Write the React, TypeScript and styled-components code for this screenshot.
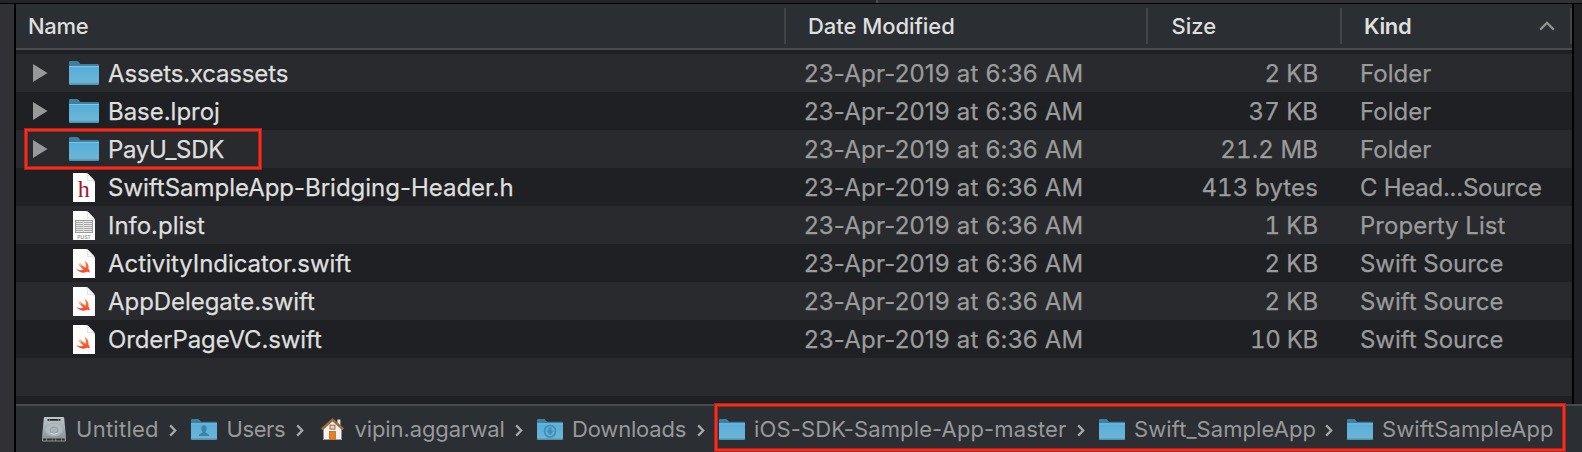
import React from 'react';
import styled, { createGlobalStyle } from 'styled-components';

const Global = createGlobalStyle`
  * { box-sizing: border-box; }
  body { margin: 0; background: #1f2023; }
`;

const Screen = styled.div`
  display: flex;
  flex-direction: column;
  width: 1582px;
  height: 452px;
  overflow: hidden;
  background: #1f2023;
  font-family: Inter, "Liberation Sans", sans-serif;
  color: #dedfdf;
`;

const TabStrip = styled.div`
  display: flex;
  height: 4px;
  flex: none;
  border-bottom: 1px solid #000;
`;

const Tab = styled.div<{ $active?: boolean }>`
  flex: ${p => (p.$active ? '1' : '0 0 878px')};
  background: ${p => (p.$active ? '#303135' : '#232427')};
  border-right: ${p => (p.$active ? 'none' : '2px solid #4c4d50')};
`;

const Body = styled.div`
  display: flex;
  flex: 1;
`;

const Sidebar = styled.div`
  width: 16px;
  flex: none;
  background: #303135;
  border-right: 2px solid #000;
`;

const Main = styled.div`
  display: flex;
  flex-direction: column;
  flex: 1;
`;

const ListPane = styled.div`
  width: 1558px;
  height: 400px;
  border-right: 2px solid #000;
  display: flex;
  flex-direction: column;
`;

const HeaderRow = styled.div`
  display: flex;
  height: 46px;
  flex: none;
  background: #2b2e32;
  border-bottom: 2px solid #4a4b4f;
  margin-bottom: 4px;
`;

const HeaderCell = styled.div<{ $w: number; $pad: number; $bold?: boolean; $ls?: number }>`
  display: flex;
  align-items: center;
  justify-content: space-between;
  position: relative;
  width: ${p => p.$w}px;
  height: 44px;
  padding: 0 17px 0 ${p => p.$pad}px;
  font-size: 22px;
  line-height: 44px;
  font-weight: ${p => (p.$bold ? 600 : 500)};
  letter-spacing: ${p => p.$ls ?? 0}px;
  &::after {
    content: '';
    position: absolute;
    right: 0;
    top: 4px;
    width: 2px;
    height: 36px;
    background: #424447;
  }
`;

const Row = styled.div<{ $light: boolean; $short?: boolean }>`
  display: flex;
  position: relative;
  height: ${p => (p.$short ? 8 : 38)}px;
  flex: none;
  background: ${p => (p.$light ? '#292a2d' : '#1f2023')};
  font-size: 24px;
  line-height: 40px;
  white-space: nowrap;
  -webkit-text-stroke: 0.25px currentColor;
`;

const NameCell = styled.div`
  display: flex;
  align-items: center;
  width: 789px;
  height: 38px;
  padding-left: 17px;
`;

const Disclosure = styled.span`
  display: flex;
  width: 36px;
`;

const IconSlot = styled.span`
  display: flex;
  justify-content: center;
  width: 30px;
  margin-right: 9px;
`;

const Spaced = styled.span<{ $ls: number }>`
  letter-spacing: ${p => p.$ls}px;
`;

const Label = styled(Spaced)`
  height: 38px;
`;

const DateCell = styled.div`
  width: 330px;
  color: #9a9b9c;
  letter-spacing: 0.2px;
  margin-left: -1px;
`;

const SizeCell = styled.div`
  width: 184px;
  text-align: right;
  color: #9a9b9c;
  font-variant-numeric: tabular-nums;
`;

const KindCell = styled.div`
  padding-left: 42px;
  color: #9a9b9c;
`;

const Highlight = styled.div<{ $x: number; $y: number; $w: number; $h: number }>`
  position: absolute;
  left: ${p => p.$x}px;
  top: ${p => p.$y}px;
  width: ${p => p.$w}px;
  height: ${p => p.$h}px;
  border: 1px solid #a8261d;
  box-shadow: inset 0 0 0 2px #fc2a1b, inset 0 0 0 3px #a8261d;
  z-index: 2;
`;

const PathBar = styled.div`
  position: relative;
  display: flex;
  height: 48px;
  border-top: 2px solid #484b4f;
  background: #2b2e32;
  padding-left: 26px;
  font-size: 22px;
  line-height: 46px;
  color: #97999b;
`;

const Segment = styled.div<{ $w: number }>`
  display: flex;
  align-items: center;
  flex: none;
  width: ${p => p.$w}px;
  white-space: nowrap;
`;

const SegmentIcon = styled.span<{ $w: number }>`
  display: flex;
  flex: none;
  width: ${p => p.$w}px;
`;

const Separator = styled.svg<{ $gap: number }>`
  margin-left: auto;
  margin-right: ${p => p.$gap}px;
  margin-top: 2px;
`;

const Triangle = () => (
  <svg width="15" height="18" viewBox="0 0 15 18">
    <path d="M0 0L14.5 9L0 18Z" fill="#97989a" />
  </svg>
);

const Folder = ({ w = 30, h = 24, mark }: { w?: number; h?: number; mark?: 'user' | 'down' }) => (
  <svg width={w} height={h} viewBox="0 0 30 24" preserveAspectRatio="none">
    <defs>
      <linearGradient id="front" x1="0" y1="0" x2="0" y2="1">
        <stop offset="0" stopColor="#55addb" />
        <stop offset="0.85" stopColor="#6cb5d5" />
        <stop offset="0.92" stopColor="#5a9fc0" />
        <stop offset="1" stopColor="#4a8caa" />
      </linearGradient>
    </defs>
    <path d="M0 1.2Q0 0 1.2 0H8Q9 0 9.7 .9L11.4 3H29Q30 3 30 4V10H0Z" fill="#407e9d" />
    <path d="M0 5H30V23Q30 24 29 24H1Q0 24 0 23Z" fill="url(#front)" />
    <path d="M0 5.5H30" stroke="#7cc6e8" strokeWidth="1" />
    {mark === 'user' && (
      <path d="M15 7.2C17.2 7.2 18.3 8.8 18.1 11C18 12.6 17.3 13.7 16.7 14.3C16.7 15.7 17.2 16 18.7 16.5C20.4 17.1 21 17.7 21 19.5H9C9 17.7 9.6 17.1 11.3 16.5C12.8 16 13.3 15.7 13.3 14.3C12.7 13.7 12 12.6 11.9 11C11.7 8.8 12.8 7.2 15 7.2Z" fill="#3c83a8" />
    )}
    {mark === 'down' && (
      <g>
        <ellipse cx="15" cy="14" rx="6.3" ry="6.6" fill="none" stroke="#3f8db6" strokeWidth="1.9" />
        <path d="M13.2 9.6H16.8V13.4H19.6L15 18.6L10.4 13.4H13.2Z" fill="#3f8db6" />
      </g>
    )}
  </svg>
);

const FileIcon = ({ type }: { type: 'h' | 'plist' | 'swift' }) => (
  <svg width="22" height="29" viewBox="0 0 22 29">
    <defs>
      <linearGradient id="bird" x1="0" y1="0" x2="0" y2="1">
        <stop offset="0" stopColor="#f98f3c" />
        <stop offset="1" stopColor="#f5402c" />
      </linearGradient>
    </defs>
    <path d="M0 0H13Q14.5 0 16 1.8L20.5 6.5Q22 8 22 10V29H0Z" fill="#fdfdfd" />
    <path d="M13 0Q14.3 2.5 14.3 8H18Q21 8 22 9.6Q22 8 20.5 6.5L16 1.8Q14.5 0 13 0Z" fill="#dcdcdc" />
    <path d="M14 0.6Q15 3.5 14.8 7.3Q18.5 7 20.7 7.4Z" fill="#f8f8f8" />
    {type === 'h' && (
      <text x="10.7" y="24.2" textAnchor="middle" fontFamily="Liberation Serif, serif" fontSize="24" fill="#a8142f">h</text>
    )}
    {type === 'plist' && (
      <g>
        <rect x="2.5" y="9.5" width="17" height="12" fill="#e8e8e8" stroke="#9b9b9b" />
        <path d="M3 11.5H19M3 13.5H19M3 15.5H19M3 17.5H19M3 19.5H19" stroke="#a8a8a8" />
        <path d="M10.5 10V21" stroke="#dedede" />
        <text x="11" y="27.7" textAnchor="middle" fontFamily="Inter, sans-serif" fontWeight="600" fontSize="4.8" fill="#8d8d8d" style={{ WebkitTextStroke: '0' }}>PLIST</text>
      </g>
    )}
    {type === 'swift' && (
      <path transform="translate(3.2 11.6)" fill="url(#bird)" d="M8.2 0C11.5 2 13 5 12.2 7.8C13.6 9.5 13.6 11 13.2 12.2C12.3 10.8 11 10.9 10.2 11.3C6.5 13 2.3 11.7 0 8.2C2.5 9.8 5.5 10.2 7.3 9C5 7.2 3 4.8 1.4 2.4C3.5 4.4 5.3 5.7 6.3 6.3C5 4.9 3.8 3.2 3 1.6C5.2 4 7.5 6 9.3 7.2C10 5.2 9.6 2.5 8.2 0Z" />
    )}
  </svg>
);

const Disk = () => (
  <svg width="24" height="25" viewBox="0 0 24 25">
    <defs>
      <linearGradient id="disk" x1="0" y1="0" x2="0" y2="1">
        <stop offset="0" stopColor="#bcc7cb" />
        <stop offset="1" stopColor="#8f9a9e" />
      </linearGradient>
    </defs>
    <path d="M3 0H21Q22 0 22.2 1L24 20H0L1.8 1Q2 0 3 0Z" fill="url(#disk)" />
    <path d="M0 19.6H24V23.5Q24 24.6 23 24.6H1Q0 24.6 0 23.5Z" fill="#8f9698" />
    <path d="M1 22.6H23" stroke="#2c2e2f" strokeWidth="2" strokeDasharray="3 .8 5 .6" />
    <path d="M5.5 2.8H18.5" stroke="#222628" strokeWidth="1.8" strokeDasharray="2 .5 8 .5" />
    <ellipse cx="12" cy="12.6" rx="8.8" ry="6.6" fill="#b0bbbf" stroke="#a0adb1" strokeWidth=".6" />
    <ellipse cx="12" cy="13.2" rx="4" ry="3.2" fill="#a8b3b7" stroke="#8b989d" strokeWidth=".7" />
    <path d="M9 16.4Q12 18.2 15.5 16.2" fill="none" stroke="#d5dcde" />
  </svg>
);

const Home = () => (
  <svg width="23" height="22" viewBox="0 0 23 22">
    <path d="M16.4 1.5H19.4V8H16.4Z" fill="#e4e6e6" />
    <path d="M2.5 10L11.5 2L20.5 10V22H2.5Z" fill="#f2f2f0" />
    <path d="M.8 11.3L11.5 1.7L22.2 11.3" fill="none" stroke="#9a6a3b" strokeWidth="2.5" />
    <rect x="9.1" y="7.2" width="4.8" height="3.9" fill="#e3ded6" stroke="#9d7147" strokeWidth="1.1" />
    <rect x="8.4" y="13.4" width="6" height="8.6" fill="#e9801c" stroke="#b86a2a" strokeWidth=".8" />
    <path d="M2 21.5H8M15 21.5H21" stroke="#9ca09c" />
  </svg>
);

const Chevron = ({ gap = 14.5 }: { gap?: number }) => (
  <Separator $gap={gap} width="8" height="13" viewBox="0 0 8 13">
    <path d="M1.2 1.4L6.2 6.5L1.2 11.6" fill="none" stroke="#a6a8a9" strokeWidth="2.3" />
  </Separator>
);

type Entry = {
  name: string; ls: number; icon: 'folder' | 'h' | 'plist' | 'swift';
  size: string; sizeLs: number; kind: string; kindLs: number; marked?: boolean;
};

const entries: Entry[] = [
  { name: 'Assets.xcassets', ls: -0.17, icon: 'folder', size: '2 KB', sizeLs: -0.1, kind: 'Folder', kindLs: 0.05 },
  { name: 'Base.lproj', ls: -0.03, icon: 'folder', size: '37 KB', sizeLs: 0, kind: 'Folder', kindLs: 0.05 },
  { name: 'PayU_SDK', ls: -0.3, icon: 'folder', size: '21.2 MB', sizeLs: 0.1, kind: 'Folder', kindLs: 0.05, marked: true },
  { name: 'SwiftSampleApp-Bridging-Header.h', ls: -0.02, icon: 'h', size: '413 bytes', sizeLs: 0.12, kind: 'C Head...Source', kindLs: -0.26 },
  { name: 'Info.plist', ls: -0.02, icon: 'plist', size: '1 KB', sizeLs: -0.1, kind: 'Property List', kindLs: 0.03 },
  { name: 'ActivityIndicator.swift', ls: -0.05, icon: 'swift', size: '2 KB', sizeLs: -0.1, kind: 'Swift Source', kindLs: -0.04 },
  { name: 'AppDelegate.swift', ls: -0.06, icon: 'swift', size: '2 KB', sizeLs: -0.1, kind: 'Swift Source', kindLs: -0.04 },
  { name: 'OrderPageVC.swift', ls: -0.11, icon: 'swift', size: '10 KB', sizeLs: -0.3, kind: 'Swift Source', kindLs: -0.04 },
];

const PathFolder = ({ mark }: { mark?: 'user' | 'down' }) => <Folder w={26} h={21} mark={mark} />;

const path = [
  { label: 'Untitled', ls: 0.26, w: 149, slot: 34, icon: <Disk /> },
  { label: 'Users', ls: -0.4, w: 129.5, slot: 35.5, gap: 16.5, icon: <PathFolder mark="user" /> },
  { label: 'vipin.aggarwal', ls: -0.1, w: 216.5, slot: 34, icon: <Home /> },
  { label: 'Downloads', ls: -0.18, w: 182, slot: 35, icon: <PathFolder mark="down" /> },
  { label: 'iOS-SDK-Sample-App-master', ls: 0.13, w: 380, slot: 35, icon: <PathFolder /> },
  { label: 'Swift_SampleApp', ls: 0.08, w: 248, slot: 35, icon: <PathFolder /> },
  { label: 'SwiftSampleApp', ls: 0.06, w: 220, slot: 35, icon: <PathFolder /> },
];

export default function App() {
  return (
    <Screen>
      <Global />
      <TabStrip>
        <Tab />
        <Tab $active />
      </TabStrip>
      <Body>
        <Sidebar />
        <Main>
          <ListPane>
            <HeaderRow>
              <HeaderCell $w={770} $pad={12} $ls={-0.3}>Name</HeaderCell>
              <HeaderCell $w={362} $pad={22} $ls={-0.05}>Date Modified</HeaderCell>
              <HeaderCell $w={194} $pad={23.5} $ls={0}>Size</HeaderCell>
              <HeaderCell $w={230} $pad={22} $bold $ls={-0.3}>
                Kind
                <svg width="16" height="10" viewBox="0 0 16 10">
                  <path d="M1.2 8.6L8 1.8L14.8 8.6" fill="none" stroke="#929496" strokeWidth="2.2" />
                </svg>
              </HeaderCell>
            </HeaderRow>
            {entries.map((e, i) => (
              <Row key={e.name} $light={i % 2 === 0}>
                <NameCell>
                  <Disclosure>{e.icon === 'folder' && <Triangle />}</Disclosure>
                  <IconSlot>{e.icon === 'folder' ? <Folder /> : <FileIcon type={e.icon} />}</IconSlot>
                  <Label $ls={e.ls}>{e.name}</Label>
                </NameCell>
                <DateCell>23-Apr-2019 at 6:36 AM</DateCell>
                <SizeCell><Spaced $ls={e.sizeLs}>{e.size}</Spaced></SizeCell>
                <KindCell><Spaced $ls={e.kindLs}>{e.kind}</Spaced></KindCell>
                {e.marked && <Highlight $x={8} $y={-2} $w={238} $h={42} />}
              </Row>
            ))}
            <Row $light />
            <Row $light={false} $short />
          </ListPane>
          <PathBar>
            {path.map((p, i) => (
              <Segment key={p.label} $w={p.w}>
                <SegmentIcon $w={p.slot}>{p.icon}</SegmentIcon>
                <Spaced $ls={p.ls}>{p.label}</Spaced>
                {i < path.length - 1 && <Chevron gap={p.gap} />}
              </Segment>
            ))}
            <Highlight $x={698} $y={-3} $w={852} $h={49} />
          </PathBar>
        </Main>
      </Body>
    </Screen>
  );
}
